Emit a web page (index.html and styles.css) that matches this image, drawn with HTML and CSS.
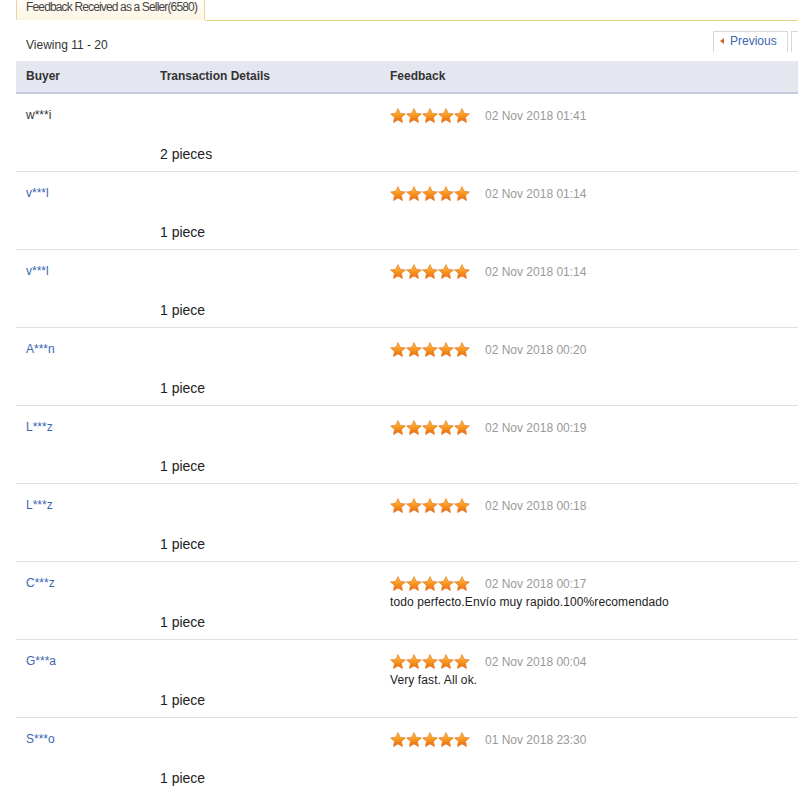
FILE: index.html
```html
<!DOCTYPE html>
<html>
<head>
<meta charset="utf-8">
<link rel="stylesheet" href="styles.css">
</head>
<body>
<svg width="0" height="0" class="defs">
  <defs>
    <linearGradient id="sg" x1="0" y1="0" x2="0" y2="1">
      <stop offset="0" stop-color="#ffc04a"/>
      <stop offset="0.55" stop-color="#f7921e"/>
      <stop offset="1" stop-color="#e8650a"/>
    </linearGradient>
    <symbol id="star" viewBox="0 0 16 16">
      <path d="M8 0.6 L10.2 5.3 L15.4 5.9 L11.4 9.4 L12.6 14.6 L8 11.9 L3.4 14.6 L4.6 9.4 L0.6 5.9 L5.8 5.3 Z" fill="url(#sg)" stroke="#e0701a" stroke-width="0.6" stroke-linejoin="round"/>
    </symbol>
  </defs>
</svg>
<div class="page">
  <div class="tabs">
    <div class="tab">Feedback Received as a Seller(6580)</div>
    <div class="tab-line"></div>
  </div>
  <div class="toolbar">
    <div class="viewing">Viewing 11 - 20</div>
    <div class="pager">
      <a class="btn prev"><span class="tri"></span>Previous</a>
      <a class="btn next"></a>
    </div>
  </div>
  <div class="table">
    <div class="thead">
      <div>Buyer</div>
      <div>Transaction Details</div>
      <div>Feedback</div>
    </div>

    <div class="row">
      <div class="buyer plain">w***i</div>
      <div class="qty">2 pieces</div>
      <div class="fb"><div class="line"><span class="stars"><svg><use href="#star"/></svg><svg><use href="#star"/></svg><svg><use href="#star"/></svg><svg><use href="#star"/></svg><svg><use href="#star"/></svg></span><span class="date">02 Nov 2018 01:41</span></div></div>
    </div>
    <div class="row">
      <div class="buyer">v***l</div>
      <div class="qty">1 piece</div>
      <div class="fb"><div class="line"><span class="stars"><svg><use href="#star"/></svg><svg><use href="#star"/></svg><svg><use href="#star"/></svg><svg><use href="#star"/></svg><svg><use href="#star"/></svg></span><span class="date">02 Nov 2018 01:14</span></div></div>
    </div>
    <div class="row">
      <div class="buyer">v***l</div>
      <div class="qty">1 piece</div>
      <div class="fb"><div class="line"><span class="stars"><svg><use href="#star"/></svg><svg><use href="#star"/></svg><svg><use href="#star"/></svg><svg><use href="#star"/></svg><svg><use href="#star"/></svg></span><span class="date">02 Nov 2018 01:14</span></div></div>
    </div>
    <div class="row">
      <div class="buyer">A***n</div>
      <div class="qty">1 piece</div>
      <div class="fb"><div class="line"><span class="stars"><svg><use href="#star"/></svg><svg><use href="#star"/></svg><svg><use href="#star"/></svg><svg><use href="#star"/></svg><svg><use href="#star"/></svg></span><span class="date">02 Nov 2018 00:20</span></div></div>
    </div>
    <div class="row">
      <div class="buyer">L***z</div>
      <div class="qty">1 piece</div>
      <div class="fb"><div class="line"><span class="stars"><svg><use href="#star"/></svg><svg><use href="#star"/></svg><svg><use href="#star"/></svg><svg><use href="#star"/></svg><svg><use href="#star"/></svg></span><span class="date">02 Nov 2018 00:19</span></div></div>
    </div>
    <div class="row">
      <div class="buyer">L***z</div>
      <div class="qty">1 piece</div>
      <div class="fb"><div class="line"><span class="stars"><svg><use href="#star"/></svg><svg><use href="#star"/></svg><svg><use href="#star"/></svg><svg><use href="#star"/></svg><svg><use href="#star"/></svg></span><span class="date">02 Nov 2018 00:18</span></div></div>
    </div>
    <div class="row">
      <div class="buyer">C***z</div>
      <div class="qty">1 piece</div>
      <div class="fb"><div class="line"><span class="stars"><svg><use href="#star"/></svg><svg><use href="#star"/></svg><svg><use href="#star"/></svg><svg><use href="#star"/></svg><svg><use href="#star"/></svg></span><span class="date">02 Nov 2018 00:17</span></div><div class="comment">todo perfecto.Envío muy rapido.100%recomendado</div></div>
    </div>
    <div class="row">
      <div class="buyer">G***a</div>
      <div class="qty">1 piece</div>
      <div class="fb"><div class="line"><span class="stars"><svg><use href="#star"/></svg><svg><use href="#star"/></svg><svg><use href="#star"/></svg><svg><use href="#star"/></svg><svg><use href="#star"/></svg></span><span class="date">02 Nov 2018 00:04</span></div><div class="comment">Very fast. All ok.</div></div>
    </div>
    <div class="row">
      <div class="buyer">S***o</div>
      <div class="qty">1 piece</div>
      <div class="fb"><div class="line"><span class="stars"><svg><use href="#star"/></svg><svg><use href="#star"/></svg><svg><use href="#star"/></svg><svg><use href="#star"/></svg><svg><use href="#star"/></svg></span><span class="date">01 Nov 2018 23:30</span></div></div>
    </div>
  </div>
</div>
</body>
</html>
```

FILE: styles.css
```css
html, body {
  margin: 0;
  padding: 0;
  background: #fff;
  overflow: hidden;
}
body {
  font-family: "Liberation Sans", Arial, sans-serif;
  color: #333;
  font-size: 12px;
}
.defs {
  position: absolute;
  width: 0;
  height: 0;
}
.page {
  width: 798px;
  box-sizing: border-box;
  padding-left: 16px;
  overflow: hidden;
}
.tabs {
  display: flex;
  height: 21px;
}
.tab {
  width: 178px;
  height: 20px;
  padding-left: 9px;
  border: 1px solid #efd39c;
  border-top: none;
  border-bottom: none;
  background: linear-gradient(#fffdf8, #fcf5e3);
  font-size: 12px;
  letter-spacing: -0.85px;
  line-height: 14px;
  color: #444;
}
.tab-line {
  flex: 1;
  border-bottom: 1px solid #efcd8d;
  height: 20px;
}
.toolbar {
  display: flex;
  align-items: flex-end;
  height: 40px;
}
.viewing {
  padding-left: 10px;
  font-size: 12px;
  line-height: 14px;
  margin-bottom: 9px;
  color: #333;
}
.pager {
  margin-left: auto;
  display: flex;
  gap: 3px;
  align-self: flex-start;
  margin-top: 10px;
  margin-right: -1px;
}
.btn {
  display: flex;
  align-items: center;
  border: 1px solid #d8d8d8;
  border-bottom: none;
  background: #fff;
  color: #3a66b0;
  font-size: 12px;
  box-sizing: border-box;
  height: 21px;
  padding-bottom: 2px;
}
.prev {
  width: 75px;
  padding-left: 6px;
}
.tri {
  width: 0;
  height: 0;
  border-top: 3.5px solid transparent;
  border-bottom: 3.5px solid transparent;
  border-right: 4px solid #d0632a;
  margin-right: 6px;
}
.next {
  width: 8px;
  border-right: none;
}
.table {
  width: 100%;
}
.thead {
  display: grid;
  grid-template-columns: 134px 230px 1fr;
  padding-left: 10px;
  height: 31px;
  align-items: center;
  background: #e5e7f0;
  border-bottom: 2px solid #c9cbdc;
  font-weight: bold;
  font-size: 12px;
  color: #333;
}
.thead div {
  margin-top: -1px;
}
.row {
  display: grid;
  grid-template-columns: 134px 230px 1fr;
  padding-left: 10px;
  height: 77px;
  border-bottom: 1px solid #e0e0e0;
}
.buyer {
  padding-top: 14px;
  line-height: 14px;
  color: #3a66b0;
  font-size: 12px;
}
.buyer.plain {
  color: #333;
}
.qty {
  padding-top: 52px;
  font-size: 14px;
  line-height: 16px;
  color: #222;
}
.fb {
  padding-top: 14px;
}
.line {
  display: flex;
  align-items: center;
  height: 16px;
}
.stars {
  display: flex;
  width: 80px;
}
.stars svg {
  width: 16px;
  height: 16px;
  display: block;
}
.date {
  margin-left: 15px;
  color: #999;
  font-size: 12px;
}
.comment {
  margin-top: 3px;
  font-size: 12px;
  line-height: 14px;
  color: #222;
  letter-spacing: 0.1px;
}
```
